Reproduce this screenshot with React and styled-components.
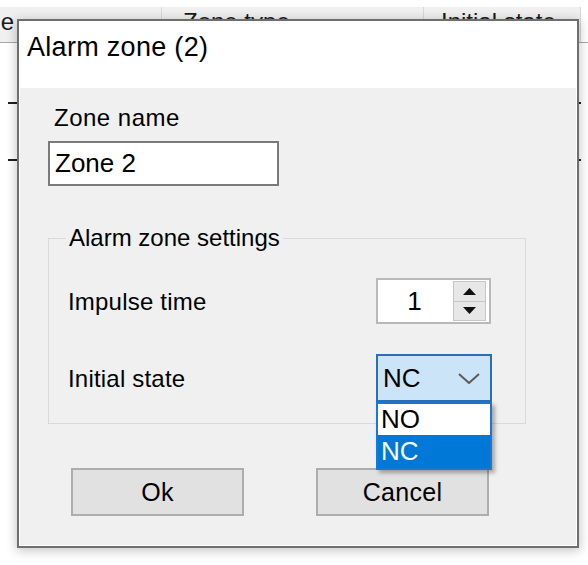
import React from "react";
import styled, { createGlobalStyle } from "styled-components";

const GlobalStyle = createGlobalStyle`
  html, body { margin: 0; padding: 0; background: #ffffff; }
  body { font-family: "Liberation Sans", Arial, sans-serif; color: #000; }
`;

const Screen = styled.div`
  position: relative;
  width: 588px;
  height: 565px;
  overflow: hidden;
  background: #ffffff;
`;

const ListView = styled.div`
  padding-top: 7px;
  width: 588px;
`;

const ListHeader = styled.div`
  display: flex;
  height: 35px;
  width: 588px;
  border-bottom: 1px solid #a8a8a8;
`;

const HeaderCell = styled.div`
  box-sizing: border-box;
  width: ${(p) => p.$w}px;
  flex: ${(p) => (p.$fill ? 1 : "none")};
  text-indent: ${(p) => p.$pad}px;
  background: ${(p) => (p.$fill ? "#ffffff" : "#f0f0f0")};
  border-right: ${(p) => (p.$fill ? "none" : "1px solid #d8d8d8")};
  font-size: 24px;
  line-height: 29px;
  color: #1a1a1a;
  white-space: nowrap;
  overflow: hidden;
`;

const ListRow = styled.div`
  height: ${(p) => p.$h}px;
  width: 573px;
  margin-left: 8px;
  border-bottom: 2px solid #1e1e1e;
`;

const Dialog = styled.div`
  position: absolute;
  left: 17px;
  top: 19px;
  width: 562px;
  height: 529px;
  box-sizing: border-box;
  border: 2px solid #6f6f6f;
  background: #ffffff;
  padding: 0 1px 1px 1px;
  display: flex;
  flex-direction: column;
  box-shadow: 0 2px 10px 1px rgba(0, 0, 0, 0.22);
`;

const TitleBar = styled.div`
  height: 67px;
  box-sizing: border-box;
  padding: 10px 0 0 7px;
  font-size: 27px;
  line-height: 32px;
  letter-spacing: 0.3px;
  color: #000;
  background: #ffffff;
`;

const Body = styled.div`
  flex: 1;
  background: #f0f0f0;
  padding: 16px 0 0 28px;
  display: flex;
  flex-direction: column;
  align-items: flex-start;
`;

const FieldLabel = styled.div`
  margin-left: 6px;
  font-size: 24px;
  line-height: 28px;
  letter-spacing: 0.5px;
`;

const TextBox = styled.div`
  margin-top: 9px;
  box-sizing: border-box;
  width: 231px;
  height: 45px;
  border: 2px solid #7a7a7a;
  background: #ffffff;
  padding-left: 5px;
  display: flex;
  align-items: center;
  font-size: 26px;
`;

const GroupBox = styled.fieldset`
  margin: 38px 0 0 0;
  box-sizing: border-box;
  width: 478px;
  min-width: 0;
  border: 1px solid #d9d9d9;
  padding: 26px 33px 21px 19px;
  display: grid;
  grid-template-columns: 1fr 116px;
  row-gap: 30px;
  align-items: center;
`;

const Legend = styled.legend`
  margin-left: -2px;
  padding: 0 3px;
  font-size: 24px;
  line-height: 28px;
`;

const RowLabel = styled.div`
  font-size: 24px;
  line-height: 28px;
  padding-top: 1px;
  letter-spacing: 0.2px;
`;

const Spinner = styled.div`
  box-sizing: border-box;
  width: 115px;
  height: 46px;
  border: 2px solid #b9b9b9;
  background: #ffffff;
  display: flex;
`;

const SpinValue = styled.div`
  flex: 1;
  display: flex;
  align-items: center;
  justify-content: center;
  font-size: 26px;
  padding-right: 2px;
`;

const SpinColumn = styled.div`
  width: 33px;
  margin: 1px 3px 1px 0;
  display: flex;
  flex-direction: column;
`;

const SpinButton = styled.div`
  flex: 1;
  box-sizing: border-box;
  border: 1px solid #c6c6c6;
  background: #e7e7e7;
  display: flex;
  align-items: center;
  justify-content: center;
  & + & { border-top: none; }
`;

const ComboWrap = styled.div`
  position: relative;
  width: 116px;
`;

const Combo = styled.div`
  box-sizing: border-box;
  height: 48px;
  border: 2px solid #2a6fb6;
  background: #cce4f7;
  display: flex;
  align-items: center;
  justify-content: space-between;
  padding: 0 10px 0 5px;
  font-size: 26px;
`;

const DropList = styled.div`
  position: absolute;
  left: 0;
  top: 100%;
  width: 116px;
  box-sizing: border-box;
  border: 2px solid #1a78d2;
  border-top: 2px solid #1a78d2;
  background: #ffffff;
  box-shadow: 3px 3px 4px rgba(0, 0, 0, 0.3);
  z-index: 2;
`;

const DropItem = styled.div`
  height: ${(p) => p.$h}px;
  padding-left: 3px;
  display: flex;
  align-items: center;
  font-size: 26px;
  background: ${(p) => (p.$selected ? "#0078d7" : "#ffffff")};
  color: ${(p) => (p.$selected ? "#ffffff" : "#000000")};
`;

const ButtonRow = styled.div`
  margin: 44px 0 0 23px;
  display: flex;
  gap: 72px;
`;

const Button = styled.div`
  box-sizing: border-box;
  width: 173px;
  height: 48px;
  border: 2px solid #adadad;
  background: #e1e1e1;
  display: flex;
  align-items: center;
  justify-content: center;
  font-size: 25px;
  letter-spacing: 0.3px;
`;

const Arrow = ({ up }) => (
  <svg width="13" height="7" viewBox="0 0 13 7">
    {up ? <polygon points="0,7 13,7 6.5,0" fill="#111" /> : <polygon points="0,0 13,0 6.5,7" fill="#111" />}
  </svg>
);

const Chevron = () => (
  <svg width="22" height="11" viewBox="0 0 22 11">
    <polyline points="1,1 11,10 21,1" fill="none" stroke="#5a5a5a" strokeWidth="2" />
  </svg>
);

export default function App() {
  return (
    <>
      <GlobalStyle />
      <Screen>
        <ListView>
          <ListHeader>
            <HeaderCell $w={162} $pad={-50}>
              Name
            </HeaderCell>
            <HeaderCell $w={262} $pad={21}>Zone type</HeaderCell>
            <HeaderCell $w={157} $pad={17}>Initial state</HeaderCell>
            <HeaderCell $fill />
          </ListHeader>
          <ListRow $h={59} />
          <ListRow $h={55} />
        </ListView>

        <Dialog>
          <TitleBar>Alarm zone (2)</TitleBar>
          <Body>
            <FieldLabel>Zone name</FieldLabel>
            <TextBox>Zone 2</TextBox>
            <GroupBox>
              <Legend>Alarm zone settings</Legend>
              <RowLabel>Impulse time</RowLabel>
              <Spinner>
                <SpinValue>1</SpinValue>
                <SpinColumn>
                  <SpinButton>
                    <Arrow up />
                  </SpinButton>
                  <SpinButton>
                    <Arrow />
                  </SpinButton>
                </SpinColumn>
              </Spinner>
              <RowLabel>Initial state</RowLabel>
              <ComboWrap>
                <Combo>
                  <span>NC</span>
                  <Chevron />
                </Combo>
                <DropList>
                  <DropItem $h={31}>NO</DropItem>
                  <DropItem $h={33} $selected>
                    NC
                  </DropItem>
                </DropList>
              </ComboWrap>
            </GroupBox>
            <ButtonRow>
              <Button>Ok</Button>
              <Button>Cancel</Button>
            </ButtonRow>
          </Body>
        </Dialog>
      </Screen>
    </>
  );
}
